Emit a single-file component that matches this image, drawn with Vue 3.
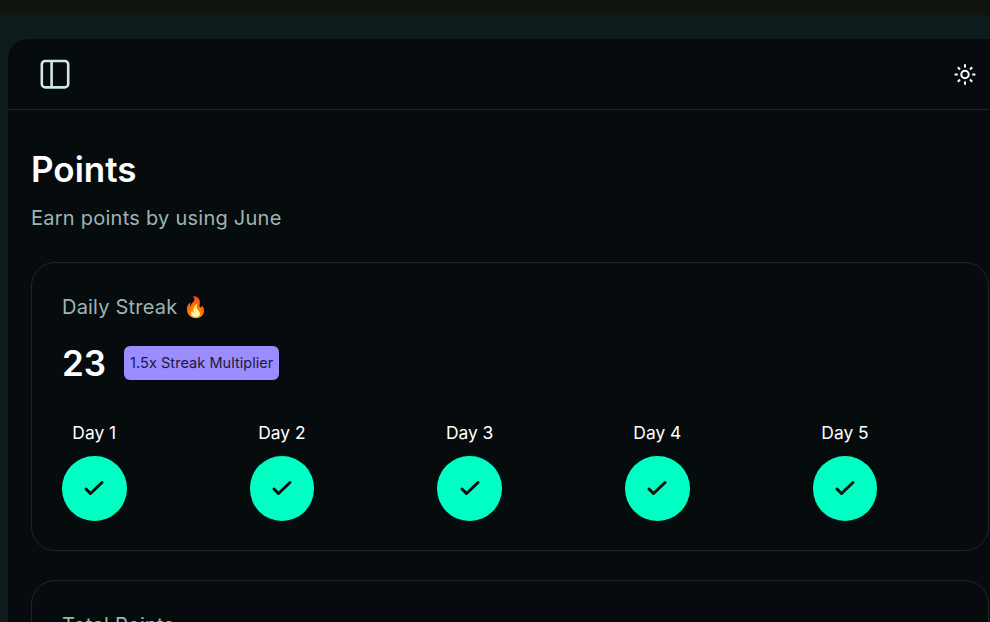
<script setup>
const days = ['Day 1', 'Day 2', 'Day 3', 'Day 4', 'Day 5']
</script>

<template>
  <div class="page">
    <div class="top-strip"></div>
    <div class="shell">
      <main class="panel">
        <header class="topbar">
          <button class="icon-btn" aria-label="Toggle sidebar">
            <svg width="32" height="32" viewBox="0 0 32 32" fill="none" stroke="#cfe8e8" stroke-width="2.6">
              <rect x="2.8" y="3" width="26.4" height="26.4" rx="3.5" />
              <path d="M12.6 3v26.4" />
            </svg>
          </button>
          <button class="icon-btn" aria-label="Toggle theme">
            <svg width="22" height="22" viewBox="0 0 22 22" fill="none" stroke="#fff" stroke-width="2">
              <circle cx="11" cy="11.5" r="3.7" />
              <path d="M11 1.2v3.2M11 18.6v3.2M.6 11.5h3.2M18.2 11.5h3.2M3.8 4.3l2.2 2.2M16 16.5l2.2 2.2M3.8 18.7L6 16.5M16 6.5l2.2-2.2" />
            </svg>
          </button>
        </header>

        <section class="content">
          <h1>Points</h1>
          <p class="subtitle">Earn points by using June</p>

          <div class="card">
            <h2 class="card-title">Daily Streak 🔥</h2>
            <div class="streak">
              <span class="streak-count">23</span>
              <span class="badge">1.5x Streak Multiplier</span>
            </div>
            <div class="days">
              <div v-for="day in days" :key="day" class="day">
                <span class="day-label">{{ day }}</span>
                <span class="day-check">
                  <svg width="24" height="24" viewBox="0 0 24 24" fill="none" stroke="#06100f" stroke-width="3" stroke-linecap="round" stroke-linejoin="round">
                    <path d="M4 13l4.5 4.5L20 6.5" />
                  </svg>
                </span>
              </div>
            </div>
          </div>

          <div class="card">
            <h2 class="card-title">Total Points</h2>
          </div>
        </section>
      </main>
    </div>
  </div>
</template>

<style>
html,
body {
  margin: 0;
  height: 100%;
  overflow: hidden;
  background: #0f1a1c;
}
</style>

<style scoped>
.page {
  width: 990px;
  height: 622px;
  overflow: hidden;
  font-family: Inter, 'Noto Sans', sans-serif;
  background: #0f1a1c;
}

.top-strip {
  height: 15px;
  background: #10140f;
}

.shell {
  padding: 24px 0 0 8px;
}

.panel {
  width: 1010px;
  height: 700px;
  background: #060b0e;
  border-radius: 20px 0 0 0;
}

.topbar {
  display: flex;
  align-items: center;
  justify-content: space-between;
  height: 71px;
  width: 982px;
  padding: 0 14px 0 31px;
  box-sizing: border-box;
  border-bottom: 1px solid #1d2426;
}

.icon-btn {
  display: flex;
  padding: 0;
  border: 0;
  background: none;
}

.content {
  width: 982px;
  box-sizing: border-box;
  padding: 35px 0 0 23px;
}

h1 {
  margin: 0;
  font-size: 35px;
  line-height: 48px;
  font-weight: 600;
  color: #fff;
}

.subtitle {
  margin: 10px 0 0;
  font-size: 20px;
  line-height: 30px;
  letter-spacing: 0.25px;
  color: #9db5b2;
}

.card {
  width: 958px;
  height: 289px;
  box-sizing: border-box;
  margin-top: 29px;
  padding: 29px 30px;
  border: 1px solid #1f2628;
  border-radius: 24px;
}

.card-title {
  margin: 0;
  font-size: 20px;
  line-height: 30px;
  font-weight: 400;
  letter-spacing: 0.2px;
  color: #9db5b2;
}

.streak {
  display: flex;
  align-items: center;
  gap: 18px;
  margin-top: 19px;
}

.streak-count {
  font-size: 35px;
  line-height: 44px;
  font-weight: 600;
  color: #fff;
}

.badge {
  padding: 0 6px;
  line-height: 34px;
  font-size: 14.5px;
  letter-spacing: 0.05px;
  color: #1c1a3a;
  background: #9b8cff;
  border-radius: 6px;
}

.days {
  display: flex;
  gap: 123.2px;
  margin-top: 35px;
}

.day {
  display: flex;
  flex-direction: column;
  align-items: center;
  width: 64.5px;
  gap: 10px;
}

.day-label {
  font-size: 17.4px;
  line-height: 26px;
  color: #fff;
  white-space: nowrap;
}

.day-check {
  display: grid;
  place-items: center;
  width: 64.5px;
  height: 64.5px;
  border-radius: 50%;
  background: #00ffc2;
}
</style>
